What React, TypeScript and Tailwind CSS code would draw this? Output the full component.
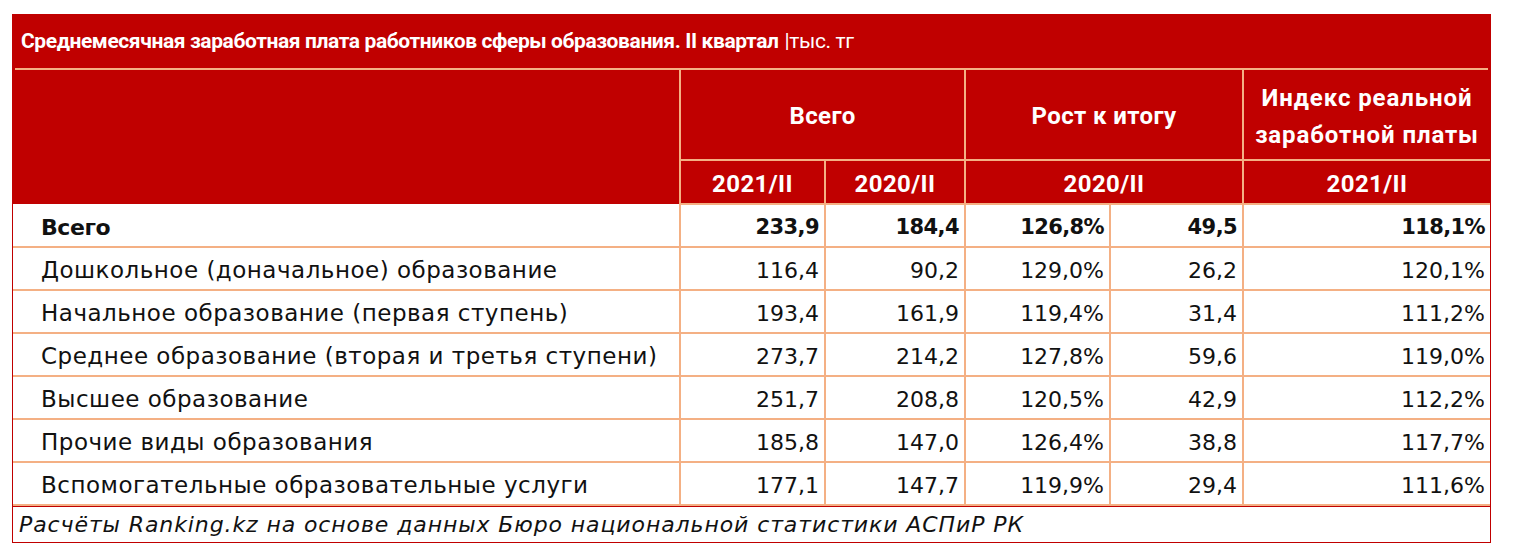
import React from 'react';

type Row = {
  name: string;
  v2021: string;
  v2020: string;
  growth: string;
  delta: string;
  index: string;
  bold?: boolean;
};

const rows: Row[] = [
  { name: 'Всего', v2021: '233,9', v2020: '184,4', growth: '126,8%', delta: '49,5', index: '118,1%', bold: true },
  { name: 'Дошкольное (доначальное) образование', v2021: '116,4', v2020: '90,2', growth: '129,0%', delta: '26,2', index: '120,1%' },
  { name: 'Начальное образование (первая ступень)', v2021: '193,4', v2020: '161,9', growth: '119,4%', delta: '31,4', index: '111,2%' },
  { name: 'Среднее образование (вторая и третья ступени)', v2021: '273,7', v2020: '214,2', growth: '127,8%', delta: '59,6', index: '119,0%' },
  { name: 'Высшее образование', v2021: '251,7', v2020: '208,8', growth: '120,5%', delta: '42,9', index: '112,2%' },
  { name: 'Прочие виды образования', v2021: '185,8', v2020: '147,0', growth: '126,4%', delta: '38,8', index: '117,7%' },
  { name: 'Вспомогательные образовательные услуги', v2021: '177,1', v2020: '147,7', growth: '119,9%', delta: '29,4', index: '111,6%' },
];

const App = () => {
  return (
    <div className="bg-white w-[1515px] h-[552px] pt-[14px] pl-[12px] font-['Roboto',sans-serif]">
      <div className="w-[1479px] border-[1.5px] border-[#c00000] bg-white">
        {/* Title */}
        <div className="bg-[#c00000] h-[55px] px-[2px] flex flex-col">
          <div className="flex-1 flex items-center pl-[6px] text-white text-[21px] font-bold tracking-[-0.4px]">
            Среднемесячная заработная плата работников сферы образования. II квартал
            <span className="font-normal ml-[6px]">|тыс. тг</span>
          </div>
          <div className="h-[2px] bg-[#f4b084]" />
        </div>

        <table className="table-fixed border-collapse w-full">
          <colgroup>
            <col className="w-[667px]" />
            <col className="w-[145px]" />
            <col className="w-[140px]" />
            <col className="w-[145px]" />
            <col className="w-[133px]" />
            <col />
          </colgroup>
          <thead className="bg-[#c00000] text-white text-[24px] tracking-[0.4px]">
            <tr className="h-[90px]">
              <th rowSpan={2} className="border-r-2 border-[#f4b084]" />
              <th colSpan={2} className="border-2 border-t-0 border-[#f4b084] font-bold pt-[2px]">Всего</th>
              <th colSpan={2} className="border-2 border-t-0 border-[#f4b084] font-bold pt-[2px]">Рост к итогу</th>
              <th className="border-b-2 border-l-2 border-[#f4b084] font-bold leading-[37px] pt-[4px] tracking-[0.9px]">
                Индекс реальной
                <br />
                заработной платы
              </th>
            </tr>
            <tr className="h-[44px]">
              <th className="border-2 border-[#f4b084] font-bold pt-[3px]">2021/II</th>
              <th className="border-2 border-[#f4b084] font-bold pt-[3px]">2020/II</th>
              <th colSpan={2} className="border-2 border-[#f4b084] font-bold pt-[3px]">2020/II</th>
              <th className="border-b-2 border-l-2 border-[#f4b084] font-bold pt-[3px]">2021/II</th>
            </tr>
          </thead>
          <tbody className="text-[#111] font-['DejaVu_Sans',sans-serif]">
            {rows.map((row) => {
              const num = row.bold
                ? 'border-2 border-[#f4b084] text-right pr-[5px] pt-[4px] font-bold text-[21px] tracking-[-0.6px]'
                : 'border-2 border-[#f4b084] text-right pr-[5px] pt-[4px] text-[22px]';
              return (
                <tr key={row.name} className="h-[43px]">
                  <td
                    className={`border-b-2 border-r-2 border-[#f4b084] pl-[28px] pt-[4px] whitespace-nowrap ${
                      row.bold ? 'font-bold text-[22px] tracking-[-0.4px]' : 'text-[23px] tracking-[0.5px]'
                    }`}
                  >
                    {row.name}
                  </td>
                  <td className={num}>{row.v2021}</td>
                  <td className={num}>{row.v2020}</td>
                  <td className={num}>{row.growth}</td>
                  <td className={num}>{row.delta}</td>
                  <td className={`${num} border-r-0`}>{row.index}</td>
                </tr>
              );
            })}
          </tbody>
        </table>

        {/* Source */}
        <div className="border-t-[1.5px] border-[#c00000] h-[36px] flex items-center pl-[6px] italic text-[22px] tracking-[0.9px] text-[#111] font-['DejaVu_Sans',sans-serif]">
          Расчёты Ranking.kz на основе данных Бюро национальной статистики АСПиР РК
        </div>
      </div>
    </div>
  );
};

export default App;
